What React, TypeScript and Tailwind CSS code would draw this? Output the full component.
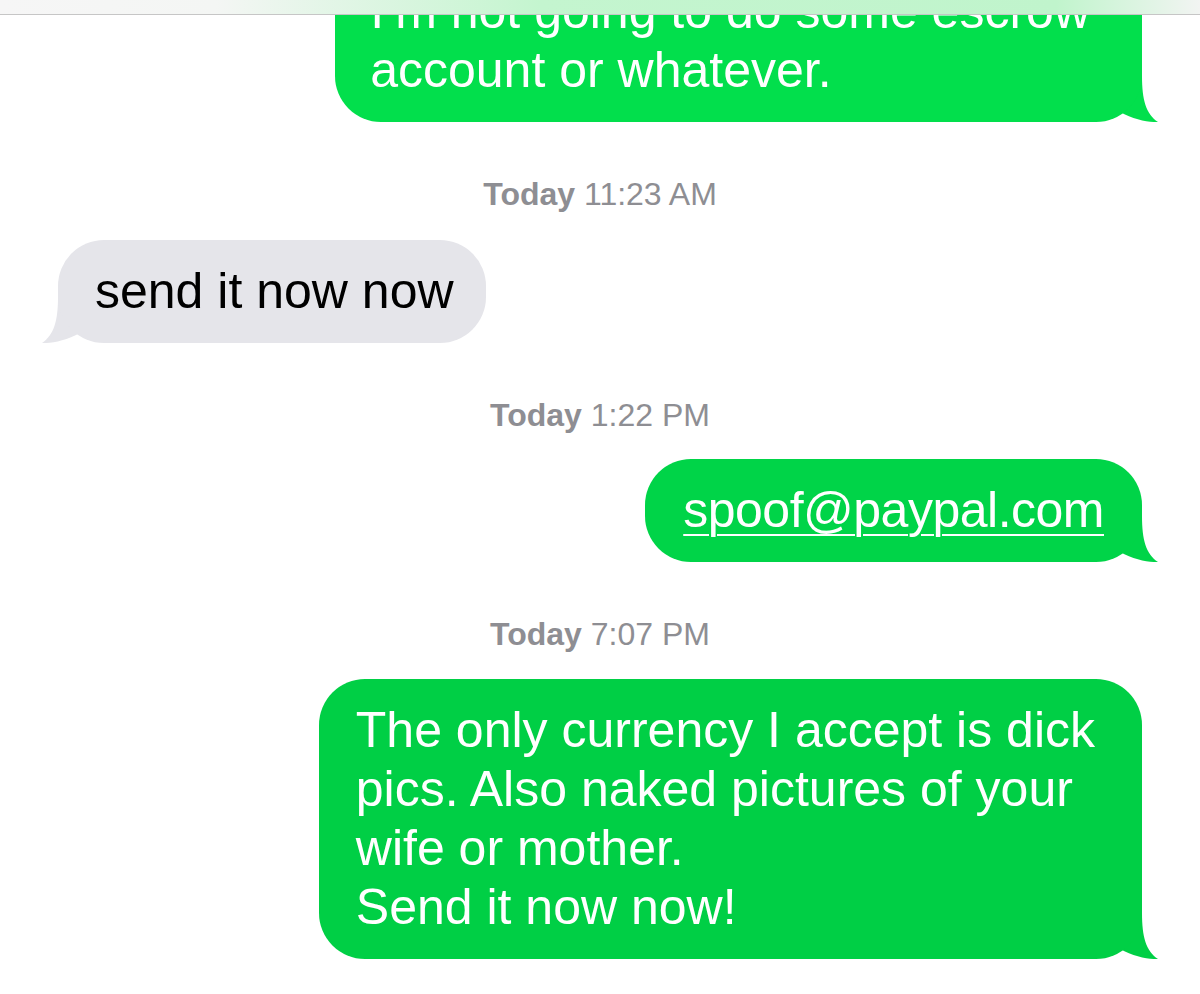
import React from "react";

function Tail({ color, side }: { color: string; side: "left" | "right" }) {
  return (
    <svg
      width="46"
      height="46"
      viewBox="0 0 46 46"
      className={
        side === "right"
          ? "absolute bottom-0 right-[-16px]"
          : "absolute bottom-0 left-[-16px] -scale-x-100"
      }
    >
      <path
        d="M30 0 C30 24 34 38 46 46 C38 46.5 22 44 8 36 L0 36 L0 0 Z"
        fill={color}
      />
    </svg>
  );
}

function Bubble({
  children,
  color,
  side,
  className,
}: {
  children: React.ReactNode;
  color: string;
  side: "left" | "right";
  className: string;
}) {
  return (
    <div className={className}>
      <div className="relative">
        <Tail color={color} side={side} />
        <div
          className="relative whitespace-nowrap rounded-[46px] py-[22px] text-[50px] leading-[59px]"
          style={{ backgroundColor: color }}
        >
          {children}
        </div>
      </div>
    </div>
  );
}

function Stamp({ time, className }: { time: string; className: string }) {
  return (
    <div
      className={
        "h-[36px] text-center text-[32px] leading-[36px] text-[#8e8e93] " +
        className
      }
    >
      <span className="font-bold">Today</span> {time}
    </div>
  );
}

export default function App() {
  return (
    <div className="relative h-[994px] w-[1200px] overflow-hidden bg-white font-['Liberation_Sans',Arial,sans-serif]">
      <div className="absolute left-0 right-0 top-0 z-10 h-[15px] border-b border-[#c6c6c6] bg-[linear-gradient(to_right,#f6f6f6_0%,#f4f6f4_18%,#c4f5cf_45%,#c0f4cc_88%,#f2f4f2_100%)]" />
      <div className="mt-[-40px] flex flex-col px-[58px]">
        <Bubble color="#02df4c" side="right" className="self-end text-white">
          <div className="pl-[35px] pr-[52px]">
            I’m not going to do some escrow
            <br />
            account or whatever.
          </div>
        </Bubble>

        <Stamp time="11:23 AM" className="mt-[54px]" />

        <Bubble color="#e5e5ea" side="left" className="mt-[28px] self-start text-black">
          <div className="pl-[37px] pr-[32px]">send it now now</div>
        </Bubble>

        <Stamp time="1:22 PM" className="mt-[54px]" />

        <Bubble color="#00d448" side="right" className="mt-[26px] self-end text-white">
          <div className="px-[38px] tracking-[-0.5px]">
            <span className="underline decoration-[2px] underline-offset-[7px]">
              spoof@paypal.com
            </span>
          </div>
        </Bubble>

        <Stamp time="7:07 PM" className="mt-[54px]" />

        <Bubble color="#00cf45" side="right" className="mt-[27px] self-end text-white">
          <div className="pl-[37px] pr-[47px]">
            The only currency I accept is dick
            <br />
            pics. Also naked pictures of your
            <br />
            wife or mother.
            <br />
            Send it now now!
          </div>
        </Bubble>
      </div>
    </div>
  );
}
